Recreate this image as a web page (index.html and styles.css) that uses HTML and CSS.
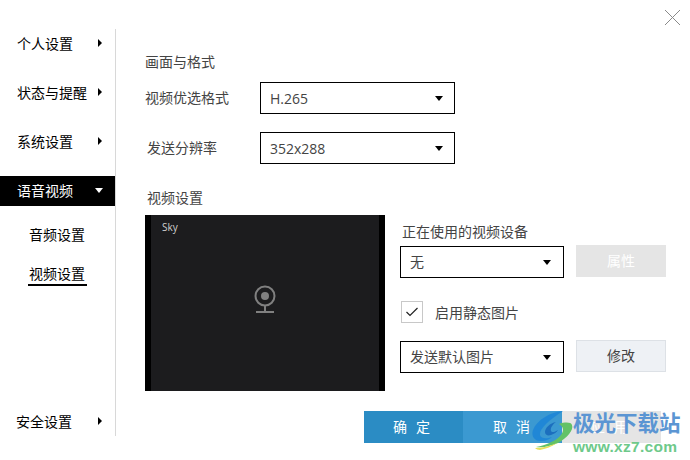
FILE: index.html
```html
<!DOCTYPE html>
<html lang="zh">
<head>
<meta charset="utf-8">
<title>设置</title>
<link rel="stylesheet" href="styles.css">
</head>
<body>
<div class="app">
  <nav class="side">
    <div class="item"><span>个人设置</span><i class="tri-r"></i></div>
    <div class="item"><span>状态与提醒</span><i class="tri-r"></i></div>
    <div class="item"><span>系统设置</span><i class="tri-r"></i></div>
    <div class="item active"><span>语音视频</span><i class="tri-d"></i></div>
    <div class="sub">音频设置</div>
    <div class="sub current">视频设置</div>
    <div class="item last"><span>安全设置</span><i class="tri-r"></i></div>
  </nav>
  <main class="main">
    <div class="heading">画面与格式</div>
    <div class="row first">
      <label class="row-label">视频优选格式</label>
      <div class="select wide"><span>H.265</span><i class="tri-d dark"></i></div>
    </div>
    <div class="row second">
      <label class="row-label indent">发送分辨率</label>
      <div class="select wide"><span>352x288</span><i class="tri-d dark"></i></div>
    </div>
    <div class="heading video-heading">视频设置</div>
    <div class="video-row">
      <div class="preview">
        <div class="screen">
          <span class="sky">Sky</span>
          <svg class="cam" width="22" height="30" viewBox="0 0 22 30">
            <circle cx="11" cy="11" r="9.5" fill="none" stroke="#808080" stroke-width="2"/>
            <circle cx="11" cy="11" r="4" fill="#808080"/>
            <path d="M11 21v6" stroke="#808080" stroke-width="2"/>
            <path d="M2 27h18" stroke="#808080" stroke-width="2"/>
          </svg>
        </div>
      </div>
      <div class="device">
        <div class="device-label">正在使用的视频设备</div>
        <div class="device-row">
          <div class="select narrow"><span>无</span><i class="tri-d dark"></i></div>
          <button class="btn disabled">属性</button>
        </div>
        <div class="check-row">
          <span class="check">
            <svg width="14" height="10" viewBox="0 0 14 10"><path d="M1.5 5l3.5 3.5L12.5 1" fill="none" stroke="#222" stroke-width="1.2"/></svg>
          </span>
          <span class="check-label">启用静态图片</span>
        </div>
        <div class="device-row pic">
          <div class="select narrow"><span>发送默认图片</span><i class="tri-d dark"></i></div>
          <button class="btn">修改</button>
        </div>
      </div>
    </div>
    <div class="footer">
      <div class="fbtn ok">确 定</div>
      <div class="fbtn cancel">取 消</div>
      <div class="fbtn apply">应 用</div>
    </div>
  </main>
</div>
<svg class="close" width="15" height="15" viewBox="0 0 15 15"><path d="M0 0l15 15M15 0L0 15" stroke="#8a8a8a" stroke-width="1" shape-rendering="crispEdges"/></svg>
<div class="mark">
  <svg class="mark-logo" width="42" height="40" viewBox="0 0 42 40">
    <path d="M31 1C18 2 5 10 1 20c-2 6 1 11 8 11 5 0 9-2 11-4-5 2-11 2-12-2-1-6 9-15 23-24z" fill="#1e86d6" fill-opacity=".92"/>
    <path d="M24 12c-6 1-11 6-11 10 0 3 3 4 6 3 3-1 6-3 7-5-3 2-6 3-7 1-1-3 2-7 5-9z" fill="#1c6fbe"/>
    <path d="M27 14c6-2 12-2 13 1 2 5-5 13-14 18-7 3-15 5-22 4 10-2 20-6 25-12 3-4 3-8-2-11z" fill="#63c266"/>
    <path d="M3 38c7 0 15-2 22-5-6 4-12 6-17 7-2 0-4-1-5-2z" fill="#e6e05a"/>
  </svg>
  <div class="mark-text">
    <div class="mark-cn">极光下载站</div>
    <div class="mark-en">www.xz7.com</div>
  </div>
</div>
</body>
</html>
```
FILE: styles.css
```css
* { box-sizing: border-box; }
html, body { margin: 0; padding: 0; }
body {
  width: 690px;
  height: 460px;
  background: #fff;
  position: relative;
  overflow: hidden;
  font-family: "Noto Sans CJK SC", "Noto Sans", sans-serif;
  font-size: 14px;
  color: #444;
}
.app { display: flex; align-items: flex-start; }

/* sidebar */
.side {
  width: 116px;
  height: 407px;
  margin-top: 29px;
  border-right: 1px solid #d8d8d8;
  display: flex;
  flex-direction: column;
  color: #000;
}
.item {
  height: 30px;
  flex: none;
  margin-right: -1px;
  padding: 0 14px 2px 17px;
  margin-bottom: 19px;
  display: flex;
  align-items: center;
  justify-content: space-between;
  line-height: 20px;
}
.item.active { background: #000; color: #fff; margin-right: 0; margin-bottom: 14px; padding-right: 12px; }
.item.last { margin-top: auto; margin-bottom: 0; padding-left: 16px; padding-bottom: 0; }
.sub {
  align-self: flex-start;
  margin-left: 28px;
  padding: 0 1px;
  height: 30px;
  line-height: 28px;
  margin-bottom: 9px;
  white-space: nowrap;
}
.sub.current { width: 59px; height: 27px; line-height: 28px; border-bottom: 2px solid #000; }
.tri-r {
  width: 0; height: 0;
  border-left: 4px solid #000;
  border-top: 4px solid transparent;
  border-bottom: 4px solid transparent;
}
.tri-d {
  width: 0; height: 0;
  border-top: 5px solid #fff;
  border-left: 4.5px solid transparent;
  border-right: 4.5px solid transparent;
}
.tri-d.dark { border-top-color: #000; }

/* main */
.main { padding: 52px 0 0 29px; flex: 1; }
.heading { height: 20px; line-height: 18px; }
.video-heading { margin-top: 24px; padding-left: 2px; }
.row { display: flex; align-items: center; height: 32px; }
.row.first { margin-top: 10px; }
.row.second { margin-top: 18px; }
.row-label { width: 115px; padding-bottom: 2px; }
.row-label.indent { padding-left: 2px; }
.select {
  height: 32px;
  border: 1px solid #000;
  background: #fff;
  display: flex;
  align-items: center;
  justify-content: space-between;
  font-family: "Open Sans", "Noto Sans CJK SC", sans-serif;
  line-height: 20px;
}
.select.wide { width: 195px; padding: 0 11px 0 9px; }
.select.narrow { width: 164px; padding: 0 12px 2px 9px; font-family: "Noto Sans CJK SC", sans-serif; }
.select.narrow .tri-d { margin-top: 2px; }
.select.wide span { font-size: 14px; padding-top: 1px; }

.video-row { display: flex; margin-top: 7px; align-items: flex-start; }
.preview {
  width: 240px;
  height: 176px;
  background: #000;
  padding: 0 6px;
}
.screen {
  height: 100%;
  background: #1c1c1e;
  position: relative;
  display: flex;
  align-items: center;
  justify-content: center;
}
.sky {
  position: absolute;
  left: 11px;
  top: 5px;
  font-family: "Open Sans", sans-serif;
  font-size: 10px;
  line-height: 14px;
  color: #d0d0d0;
}
.cam { margin-bottom: 6px; }
.device { margin-left: 15px; width: 266px; }
.device-label { margin-top: 6px; height: 20px; line-height: 20px; padding-left: 2px; }
.device-row { display: flex; align-items: flex-start; margin-top: 4px; }
.device-row .select { margin-top: 1px; }
.btn {
  width: 90px;
  height: 32px;
  margin-left: 12px;
  border: 1px solid #dde1e6;
  background: #eef1f5;
  color: #444;
  font: inherit;
  padding: 0 0 3px;
}
.btn.disabled { background: #e5e5e5; border-color: #e5e5e5; color: #fff; }
.check-row { display: flex; align-items: center; margin-top: 23px; margin-left: 1px; height: 22px; }
.check {
  width: 22px;
  height: 22px;
  border: 1px solid #c8c8c8;
  display: flex;
  align-items: center;
  justify-content: center;
}
.check-label { margin-left: 12px; line-height: 20px; }
.device-row.pic { margin-top: 17px; }

.footer { display: flex; margin-top: 20px; margin-left: 219px; }
.fbtn {
  width: 99px;
  height: 32px;
  line-height: 30px;
  text-align: center;
  color: #fff;
  word-spacing: 6px;
  padding-right: 4px;
}
.fbtn.cancel { padding-right: 2px; }
.fbtn.ok { background: #2b8cc4; }
.fbtn.cancel { background: #3b99d1; }
.fbtn.apply { background: #e5e5e5; }

/* overlays */
.close { position: absolute; left: 665px; top: 10px; }
.mark {
  position: absolute;
  left: 532px;
  top: 410px;
  display: flex;
  align-items: flex-start;
  pointer-events: none;
}
.mark-text { margin-left: -1px; }
.mark-cn {
  font-family: "Noto Sans CJK SC", sans-serif;
  font-weight: 700;
  font-size: 21.5px;
  line-height: 24px;
  color: #5b95d3;
}
.mark-en {
  margin-top: 5px;
  font-family: "Liberation Sans", sans-serif;
  font-weight: 700;
  font-size: 15.5px;
  line-height: 15px;
  letter-spacing: .3px;
  color: #6ec98a;
}
```
